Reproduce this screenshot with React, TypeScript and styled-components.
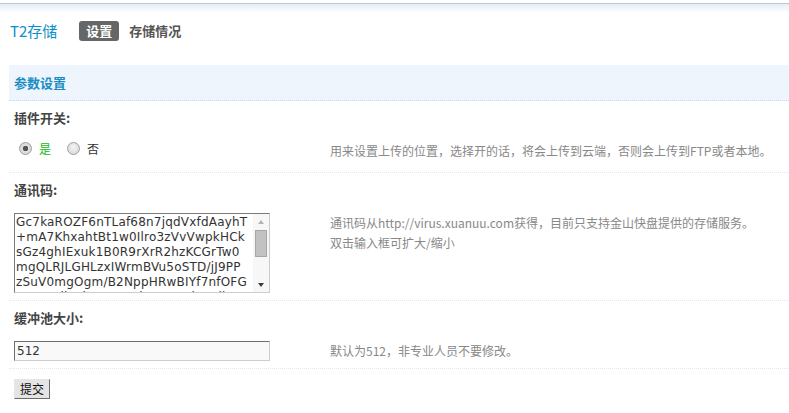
import React from 'react';
import styled, {createGlobalStyle} from 'styled-components';

const token = [
    'Gc7kaROZF6nTLaf68n7jqdVxfdAayhT',
    '+mA7KhxahtBt1w0Ilro3zVvVwpkHCk',
    'sGz4ghIExuk1B0R9rXrR2hzKCGrTw0',
    'mgQLRJLGHLzxIWrmBVu5oSTD/jJ9PP',
    'zSuV0mgOgm/B2NppHRwBIYf7nfOFG',
    'uqBZudiFEiVOIm4edouQ+t//hIPKlb1/',
    'Qx8kLmV2Tn5pYw3RsZ0aHd7cE1fUg9',
    'JbKo4Xi6qWr2NtMlVyBs8eOzPaC3uD',
].join('\n');

const GlobalStyle = createGlobalStyle`
    html, body {
        margin: 0;
        padding: 0;
        background: #fff;
    }

    body {
        font-family: "Noto Sans CJK SC", "DejaVu Sans", sans-serif;
        font-size: 12px;
        color: #333;
    }
`;

const Page = styled.div`
    width: 789px;
    min-height: 413px;
    overflow: hidden;
`;

const TopBar = styled.div`
    margin-top: 3px;
    height: 9px;
    border-top: 1px solid #b4cad4;
    background: linear-gradient(#e4eef6, #ffffff);
`;

const Nav = styled.div`
    display: flex;
    align-items: center;
    height: 20px;
    padding: 8px 0 0 10px;
`;

const Title = styled.span`
    font-size: 15px;
    color: #0d8fca;
    margin-right: 22px;
    line-height: 20px;
`;

const Tab = styled.span<{ $active?: boolean }>`
    height: 20px;
    line-height: 20px;
    padding: 0 7px;
    margin-right: 3px;
    border-radius: 3px;
    font-size: 13px;
    font-weight: bold;
    color: ${p => p.$active ? '#fff' : '#555'};
    background: ${p => p.$active ? '#666' : 'transparent'};
`;

const Panel = styled.div`
    margin: 24px 0 0 9px;
`;

const PanelHead = styled.div`
    height: 35px;
    line-height: 35px;
    padding-left: 5px;
    background: #eef5fc;
    border-bottom: 1px dotted #c8dcec;
    color: #1a8dc5;
    font-size: 13px;
    font-weight: bold;
`;

const Row = styled.div`
    padding: 8px 0 7px 5px;
    border-bottom: 1px dotted #dfe6ec;
`;

const Label = styled.div`
    line-height: 18px;
    font-size: 13px;
    font-weight: bold;
    color: #444;
`;

const Field = styled.div`
    display: grid;
    grid-template-columns: 316px 1fr;
    align-items: start;
    margin-top: 14px;
`;

const Tip = styled.div`
    line-height: 20px;
    color: #888;
`;

const RadioGroup = styled.div`
    display: flex;
    align-items: flex-start;
    height: 23px;
    padding: 1px 0 0 5px;
`;

const RadioLabel = styled.label<{ $on?: boolean }>`
    display: flex;
    align-items: center;
    gap: 7px;
    margin-right: 16px;
    line-height: 13px;
    color: ${p => p.$on ? '#11bb11' : '#333'};
`;

const Radio = styled.input.attrs({type: 'radio'})`
    appearance: none;
    margin: 0;
    width: 13px;
    height: 13px;
    box-sizing: border-box;
    border: 1px solid #a0a0a0;
    border-radius: 50%;
    background: radial-gradient(circle at 50% 40%, #f4f4f4, #d2d2d2);

    &:checked {
        background: radial-gradient(circle, #555 0 2.5px, #e0e0e0 3px, #cfcfcf 100%);
    }
`;

const CodeFrame = styled.div`
    display: flex;
    width: 256px;
    height: 80px;
    box-sizing: border-box;
    border: 1px solid;
    border-color: #7a7a7a #cdcdcd #cdcdcd #7a7a7a;
    background: #fff;
`;

const CodeBox = styled.textarea`
    flex: 1;
    min-width: 0;
    margin: 0;
    padding: 1px 1px 0;
    border: 0;
    background: transparent;
    color: #333;
    font-family: "DejaVu Sans", Verdana, sans-serif;
    font-size: 12px;
    line-height: 15px;
    letter-spacing: 0.2px;
    white-space: pre;
    resize: none;
    outline: none;
    overflow: hidden;
`;

const ScrollBar = styled.div`
    display: flex;
    flex-direction: column;
    width: 16px;
    background: #f7f7f7;
`;

const ScrollArrow = styled.div<{ $down?: boolean }>`
    height: 15px;
    display: flex;
    align-items: center;
    justify-content: center;

    &::after {
        content: "";
        border-left: 3.5px solid transparent;
        border-right: 3.5px solid transparent;
        ${p => p.$down
            ? 'border-top: 4px solid #3c3c3c;'
            : 'border-bottom: 4px solid #b4b4b4;'}
    }
`;

const ScrollThumb = styled.div`
    height: 27px;
    margin: 1px 2px 0;
    box-sizing: border-box;
    background: #c2c2c2;
    border: 1px solid #a6a6a6;
`;

const ScrollGap = styled.div`
    flex: 1;
`;

const TextInput = styled.input`
    display: block;
    width: 256px;
    height: 20px;
    box-sizing: border-box;
    margin: 0;
    padding: 0 2px;
    border: 1px solid;
    border-color: #6e6e6e #cdcdcd #cdcdcd #6e6e6e;
    background: #f9f9f9;
    color: #333;
    font-family: "DejaVu Sans", Verdana, sans-serif;
    font-size: 12px;
    outline: none;
`;

const Actions = styled.div`
    padding: 10px 0 0 5px;
`;

const SubmitButton = styled.button`
    height: 20px;
    width: 36px;
    padding: 0;
    border: 1px solid;
    border-color: #e6e6e6 #6c6c6c #6c6c6c #e6e6e6;
    background: #e4e4e4;
    color: #111;
    font-family: "Noto Sans CJK SC", sans-serif;
    font-size: 12px;
    line-height: 18px;
`;

const App = () => {
    return (
        <Page>
            <GlobalStyle/>
            <TopBar/>
            <Nav>
                <Title>T2存储</Title>
                <Tab $active>设置</Tab>
                <Tab>存储情况</Tab>
            </Nav>
            <Panel>
                <PanelHead>参数设置</PanelHead>
                <Row>
                    <Label>插件开关:</Label>
                    <Field>
                        <RadioGroup>
                            <RadioLabel $on>
                                <Radio name="switch" defaultChecked/>是
                            </RadioLabel>
                            <RadioLabel>
                                <Radio name="switch"/>否
                            </RadioLabel>
                        </RadioGroup>
                        <Tip>用来设置上传的位置，选择开的话，将会上传到云端，否则会上传到FTP或者本地。</Tip>
                    </Field>
                </Row>
                <Row>
                    <Label>通讯码:</Label>
                    <Field>
                        <CodeFrame>
                            <CodeBox defaultValue={token} spellCheck={false}/>
                            <ScrollBar>
                                <ScrollArrow/>
                                <ScrollThumb/>
                                <ScrollGap/>
                                <ScrollArrow $down/>
                            </ScrollBar>
                        </CodeFrame>
                        <Tip>
                            通讯码从http://virus.xuanuu.com获得，目前只支持金山快盘提供的存储服务。<br/>
                            双击输入框可扩大/缩小
                        </Tip>
                    </Field>
                </Row>
                <Row>
                    <Label>缓冲池大小:</Label>
                    <Field>
                        <TextInput defaultValue="512"/>
                        <Tip>默认为512，非专业人员不要修改。</Tip>
                    </Field>
                </Row>
                <Actions>
                    <SubmitButton>提交</SubmitButton>
                </Actions>
            </Panel>
        </Page>
    );
};

export default App;
